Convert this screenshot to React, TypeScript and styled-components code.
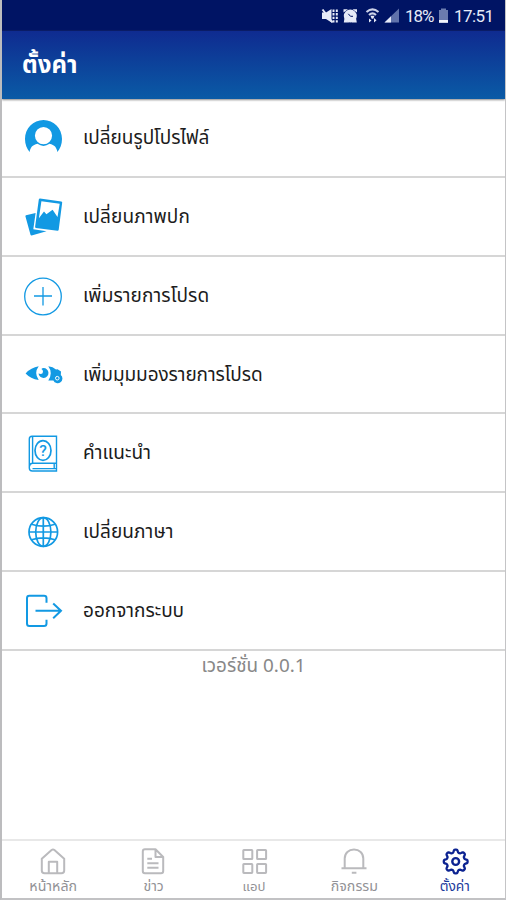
import React from "react";
import styled, { createGlobalStyle } from "styled-components";

const Global = createGlobalStyle`
  *{box-sizing:border-box}
  body{margin:0;background:#fff;font-family:"Noto Sans Thai","Noto Sans",Roboto,sans-serif}
`;
const Screen = styled.div`
  width:506px;height:900px;display:flex;flex-direction:column;background:#fff;
  border-left:2px solid #bcbcbe;border-right:1px solid #c4c4c6;border-bottom:2px solid #c2c2c4;overflow:hidden;
`;
const StatusBar = styled.div`
  height:31px;flex:none;background:#001464;color:#e6eaf8;display:flex;align-items:center;
  padding:1px 0 0 318px;font:17px Roboto,sans-serif;
  svg{display:block;flex:none}
`;
const StatusText = styled.span<{ $w: number; $gap: number }>`
  width:${p => p.$w}px;flex:none;white-space:nowrap;letter-spacing:${p => p.$gap}px;
`;
const Header = styled.header`
  height:68px;flex:none;display:flex;align-items:center;padding:2px 0 0 20px;color:#fff;
  background:linear-gradient(#0f2b90,#0a5ba6);font-size:24px;font-weight:700;
  box-shadow:0 1px 2px #888;position:relative;
`;
const List = styled.div`flex:none;display:grid;grid-template-rows:79px 79px 79px 78px 79px 79px 79px;`;
const Row = styled.div`
  display:flex;align-items:center;border-bottom:2px solid #d6d6d6;padding:1px 0 0 21px;color:#1c1c1c;
`;
const RowIcon = styled.span`width:40px;height:40px;margin-right:20px;color:#1299e3;svg{display:block}`;
const Label = styled.span<{ $gap: number }>`
  font-size:19px;letter-spacing:${p => p.$gap}px;white-space:nowrap;line-height:30px;padding-top:2px;
`;
const Version = styled.div`flex:1;text-align:center;color:#888;font-size:18.9px;line-height:31px;`;
const Nav = styled.nav`
  height:59px;flex:none;border-top:2px solid #e8e8e8;display:grid;grid-template-columns:repeat(5,1fr);padding-left:1px;
`;
const Tab = styled.div<{ $on?: boolean }>`
  display:flex;flex-direction:column;align-items:center;padding-top:6px;color:${p => (p.$on ? "#0c2391" : "#bababd")};
  svg{display:block;flex:none}
`;
const TabLabel = styled.span<{ $size: number; $on?: boolean }>`
  font-size:${p => p.$size}px;line-height:24px;white-space:nowrap;color:${p => (p.$on ? "#1c3a9c" : "#929296")};
`;

const Glyph = ({ children }: { children: React.ReactNode }) => (
  <svg width="40" height="40" viewBox="0 0 40 40" fill="none" stroke="currentColor" strokeWidth="1.7">{children}</svg>
);

const ProfileIcon = () => (
  <Glyph>
    <path stroke="none" fill="currentColor" fillRule="evenodd"
      d="M6.6 34C3.8 30.8 2 26.2 2 21C2 10.4 10.3 2 20.5 2S39 10.4 39 21C39 26.2 37.2 30.8 34.4 34C33.5 29.5 31.8 27 26.5 25.8Q20.5 30 14.5 25.8C9.2 27 7.5 29.5 6.6 34ZM20.5 9A8.6 8.6 0 1 0 20.5 26.2A8.6 8.6 0 1 0 20.5 9Z" />
  </Glyph>
);
const PhotosIcon = () => (
  <Glyph>
    <g stroke="none" fill="currentColor">
      <path d="M3 18.3L12.6 15.9L10.3 32.2L23.5 34.2L8.6 38.5Q7.8 38.6 7.5 37.8L2.4 19.3Q2.3 18.6 3 18.3Z" />
      <path fillRule="evenodd" d="M17 1.6L38.3 4.4Q39.3 4.6 39.2 5.6L35.7 32.8Q35.5 33.8 34.5 33.7L12.9 30.9Q12 30.7 12.1 29.8L15.8 2.6Q16 1.6 17 1.6ZM18.4 4.3L15.9 21.3L18.7 17.4L21 14.4L23.4 17.2L25.1 16L29.6 12.7L34.5 20L36.7 6.8Z" />
    </g>
  </Glyph>
);
const AddIcon = () => (
  <Glyph><circle cx="20" cy="20.5" r="18.3" strokeWidth="1.3" /><path d="M11 20H29M20 11V29.5" strokeWidth="1.3" /></Glyph>
);
const ViewIcon = () => (
  <Glyph>
    <g stroke="none" fill="currentColor">
      <path d="M2.6 18.4Q8 12.5 15.7 11.3Q10.7 18 15.7 25Q7.5 23.7 2.6 18.4Z" />
      <path d="M20.5 13A5 5 0 1 1 15.5 18.6Q19.8 20 20 16.8Q20 14.8 18.4 14Q19.2 13 20.5 13Z" />
      <path d="M25.3 11.3Q30 11.8 33 14.5L34.6 14.2L38 16.5L37.8 20A4.7 4.7 0 1 1 30.4 25.4L25.3 25.4Q30.2 18 25.3 11.3Z" />
    </g>
    <circle cx="34.3" cy="23.2" r="1.8" stroke="#fff" strokeWidth="1" />
  </Glyph>
);
const GuideIcon = () => (
  <Glyph>
    <path d="M33.5 3.2H9Q6.3 3.2 6.3 6V35Q6.3 38 9.3 38H33.5V3.2ZM9.6 3.5V30M33.5 30.2H9.5Q6.5 30.3 6.5 33.5M33 35.6H9.5M31.2 30.2V35.6" strokeWidth="1.4" />
    <ellipse cx="20" cy="17.5" rx="8" ry="9.8" strokeWidth="1.7" />
    <text x="20" y="23" textAnchor="middle" stroke="none" fill="currentColor" fontSize="15.5" fontWeight="500" fontFamily="Roboto, sans-serif">?</text>
  </Glyph>
);
const GlobeIcon = () => (
  <Glyph>
    <circle cx="20.3" cy="20" r="14.3" /><ellipse cx="20.3" cy="20" rx="7.6" ry="14.3" />
    <path d="M20.3 5.7V34.3M6 20H34.6M8.5 12.2Q20.3 16 32.1 12.2M8.5 27.8Q20.3 24 32.1 27.8" />
  </Glyph>
);
const LogoutIcon = () => (
  <Glyph>
    <path d="M23.5 11.8V7.2Q23.5 4.8 21 4.8H6.4Q4 4.8 4 7.2V32.5Q4 35 6.4 35H21Q23.5 35 23.5 32.5V28.8M12.5 19.8H38M30.2 12.4L38 19.8L30.2 27.3" strokeWidth="2" />
  </Glyph>
);

const TabGlyph = ({ children }: { children: React.ReactNode }) => (
  <svg width="28" height="28" viewBox="0 0 28 28" fill="none" stroke="currentColor" strokeWidth="2" strokeLinejoin="round">{children}</svg>
);
const HomeIcon = () => (
  <TabGlyph><path d="M2.8 11.8L12.6 3Q14 1.9 15.4 3L25.2 11.8V23.5Q25.2 26.3 22.4 26.3H5.6Q2.8 26.3 2.8 23.5ZM9.8 26V14.8H18.2V26" /></TabGlyph>
);
const NewsIcon = () => (
  <TabGlyph><path d="M15.5 2.3H5Q2.8 2.3 2.8 4.5V24Q2.8 26.3 5 26.3H21Q23.2 26.3 23.2 24V10L15.5 2.3V10H23M7.3 11.7H12M7.3 16.2H18.5M7.3 20.8H18.5" /></TabGlyph>
);
const AppsIcon = () => (
  <TabGlyph>{[3.3, 17.1].map(x => [3, 16.9].map(y => <rect key={x + "-" + y} x={x} y={y} width="9" height="9" rx=".6" />))}</TabGlyph>
);
const BellIcon = () => (
  <TabGlyph><path d="M1.5 21.3H26.5M4.7 21V11.5C4.7 6 8.7 2.5 14 2.5S23.3 6 23.3 11.5V21M11.8 25.8H16.4" /></TabGlyph>
);
const gearPath = Array.from({ length: 144 }, (_, i) => {
  const a = (i / 144) * Math.PI * 2;
  const r = 10.5 + 1.5 * Math.tanh(1.7 * Math.cos(8 * a));
  return `${i ? "L" : "M"}${(14.7 + r * Math.cos(a)).toFixed(2)} ${(14.5 + r * Math.sin(a)).toFixed(2)}`;
}).join("") + "Z";
const GearIcon = () => (
  <TabGlyph><path d={gearPath} strokeWidth="2.3" /><circle cx="14.7" cy="14.5" r="3.4" strokeWidth="2.4" /></TabGlyph>
);

const StatusIcons = () => (
  <svg width="85" height="20" viewBox="320 6 85 20" fill="#e6eaf8">
    <path d="M322 12.5H326L331.5 9V22.5L326 19H322Z" />
    <path d="M322.5 9.5L332.5 22.5" stroke="#e6eaf8" strokeWidth="2" />
    <path d="M333.5 9.5V22.5M336.8 9.5V22.5" stroke="#e6eaf8" strokeWidth="2" strokeDasharray="2.4 1.2" />
    <circle cx="350.3" cy="16" r="6.5" />
    <path d="M343.5 12.5V9.3H348ZM357 12.5V9.3H352.5ZM343.8 22.6L344.5 18L349 22.6ZM356.8 22.6L356 18L351.5 22.6Z" />
    <path d="M348.3 13.8L350.5 16.3H353" stroke="#001464" strokeWidth="1" fill="none" />
    <g fill="none" stroke="#cbd2e8" strokeWidth="2.1"><path d="M366.5 12Q372.5 6.7 378.5 12M369 15Q372.5 11.8 376 15" /></g>
    <path d="M370.5 15.7H374.5L373.3 18.8H371.7ZM369 22.5V18.5L371.5 20.5ZM374 18L376.5 20.3L374 22.5Z" />
    <path d="M399 8.5V22.5H384.5Z" fill="#6072ab" /><path d="M391 16.2V22.5H384.5Z" />
  </svg>
);
const BatteryIcon = () => (
  <svg width="20" height="20" viewBox="434 6 20 20"><path d="M439 10H441V8.5H446V10H448V22.5H439Z" fill="#6b7caf" /><path d="M439 20H448V22.8H439Z" fill="#f2f4fb" /></svg>
);

const items = [
  { text: "เปลี่ยนรูปโปรไฟล์", gap: -0.05, Icon: ProfileIcon },
  { text: "เปลี่ยนภาพปก", gap: 0.1, Icon: PhotosIcon },
  { text: "เพิ่มรายการโปรด", gap: 0.1, Icon: AddIcon },
  { text: "เพิ่มมุมมองรายการโปรด", gap: -0.08, Icon: ViewIcon },
  { text: "คำแนะนำ", gap: 0.1, Icon: GuideIcon },
  { text: "เปลี่ยนภาษา", gap: 0.08, Icon: GlobeIcon },
  { text: "ออกจากระบบ", gap: 0, Icon: LogoutIcon },
];
const tabs = [
  { text: "หน้าหลัก", size: 14.2, Icon: HomeIcon },
  { text: "ข่าว", size: 14, Icon: NewsIcon },
  { text: "แอป", size: 13.2, Icon: AppsIcon },
  { text: "กิจกรรม", size: 14.2, Icon: BellIcon },
  { text: "ตั้งค่า", size: 13.8, Icon: GearIcon },
];

export default function App() {
  return (
    <>
      <Global />
      <Screen>
        <StatusBar>
          <StatusIcons />
          <StatusText $w={29} $gap={-1}>18%</StatusText>
          <BatteryIcon />
          <StatusText $w={40} $gap={-0.6}>17:51</StatusText>
        </StatusBar>
        <Header>ตั้งค่า</Header>
        <List>
          {items.map(({ text, gap, Icon }) => (
            <Row key={text}><RowIcon><Icon /></RowIcon><Label $gap={gap}>{text}</Label></Row>
          ))}
        </List>
        <Version>เวอร์ชั่น 0.0.1</Version>
        <Nav>
          {tabs.map(({ text, size, Icon }, i) => (
            <Tab key={text} $on={i === 4}><Icon /><TabLabel $size={size} $on={i === 4}>{text}</TabLabel></Tab>
          ))}
        </Nav>
      </Screen>
    </>
  );
}
